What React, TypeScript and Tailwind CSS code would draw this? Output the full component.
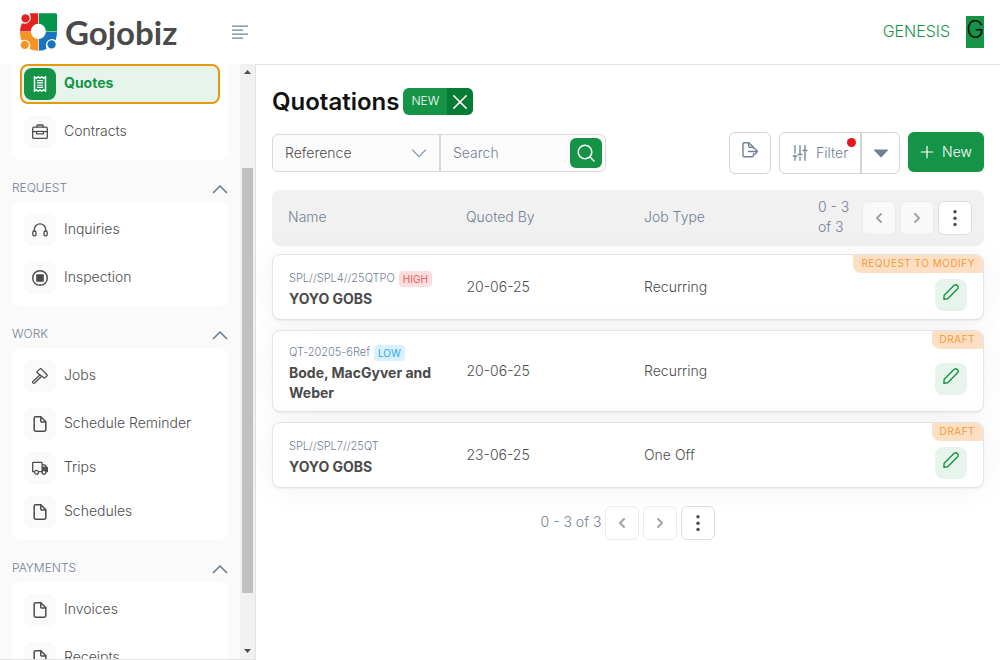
import React from "react";

type IconProps = { className?: string; children: React.ReactNode; box?: string; width?: number };

function Icon({ className = "size-4", children, box = "0 0 16 16", width = 1.3 }: IconProps) {
  return (
    <svg
      viewBox={box}
      className={className}
      fill="none"
      stroke="currentColor"
      strokeWidth={width}
      strokeLinecap="round"
      strokeLinejoin="round"
      aria-hidden="true"
    >
      {children}
    </svg>
  );
}

const ReceiptIcon = () => (
  <Icon width={1.5}>
    <path d="M2.5 1v14l1.8-1.2L6.2 15 8 13.8 9.8 15l1.9-1.2 1.8 1.2V1l-1.8 1.2L9.8 1 8 2.2 6.2 1 4.3 2.2z" strokeLinejoin="miter" />
    <path d="M5.4 4.6h5.2M5.4 6.900h5.2M5.4 9.200h5.2M5.4 11.400h5.2" strokeWidth="1.1" />
  </Icon>
);
const BriefcaseIcon = () => (
  <Icon>
    <rect x=".7" y="3.2" width="14.6" height="11.2" rx="1.2" />
    <path d="M5 3V1.6Q5 1 5.6 1h4.8q.6 0 .6.6V3M.8 7.6h3.4M11.8 7.6h3.4M4.6 7.4h6.8v2.4H4.6z" />
  </Icon>
);
const HeadphonesIcon = () => (
  <Icon>
    <path d="M2.3 9V7.6a5.7 5.7 0 0 1 11.4 0V9" />
    <rect x=".8" y="9" width="3.2" height="4.8" rx="1.4" />
    <rect x="12" y="9" width="3.2" height="4.8" rx="1.4" />
  </Icon>
);
const StopCircleIcon = () => (
  <Icon width={1.4}>
    <circle cx="8" cy="8" r="7.3" />
    <rect x="4.9" y="4.9" width="6.2" height="6.2" fill="currentColor" />
  </Icon>
);
const HammerIcon = () => (
  <Icon>
    <path d="M5.2 3.6 8 .9q.6-.5 1.2 0l5.8 5.9q.5.6 0 1.1l-2 1.9q-.6.4-1.1 0L5.2 4.8q-.5-.6 0-1.2z" />
    <path d="M7.6 7.3.9 13.4q-.5 1 .2 1.6.8.6 1.6 0l6.4-6.3" />
  </Icon>
);
const FileIcon = () => (
  <Icon width={1.5}>
    <path d="M3.6.8h5.2l5 5v8q0 1.4-1.4 1.4H3.6q-1.4 0-1.4-1.4V2.2Q2.2.8 3.6.8z" />
    <path d="M8.8.9v4.3q0 .7.7.7h4.2" />
  </Icon>
);
const TruckIcon = () => (
  <Icon>
    <path d="M2 11.6H.7V2.9q0-.6.6-.6h8.2q.6 0 .6.6v8.7H7.2M10.2 4.8h2.6l2.5 3.3v3.5h-1" />
    <path d="M10.8 7.2h4l.5 1.3v2.8h-1.6q-1.6-1.4-2.9 0z" fill="currentColor" />
    <circle cx="4.5" cy="12.3" r="1.9" />
    <circle cx="12" cy="12.3" r="1.9" fill="#fafafa" />
  </Icon>
);

const ChevronUp = () => (
  <Icon className="h-4 w-4 text-[#718096]" width={1.7}>
    <path d="m1.5 12.5 6.5-6.5 6.5 6.5" />
  </Icon>
);

type Entry = { label: string; icon: () => React.ReactElement; active?: boolean };
type Group = { title?: string; items: Entry[] };

const groups: Group[] = [
  {
    items: [
      { label: "Quotes", icon: ReceiptIcon, active: true },
      { label: "Contracts", icon: BriefcaseIcon },
    ],
  },
  {
    title: "REQUEST",
    items: [
      { label: "Inquiries", icon: HeadphonesIcon },
      { label: "Inspection", icon: StopCircleIcon },
    ],
  },
  {
    title: "WORK",
    items: [
      { label: "Jobs", icon: HammerIcon },
      { label: "Schedule Reminder", icon: FileIcon },
      { label: "Trips", icon: TruckIcon },
      { label: "Schedules", icon: FileIcon },
    ],
  },
  {
    title: "PAYMENTS",
    items: [
      { label: "Invoices", icon: FileIcon },
      { label: "Receipts", icon: FileIcon },
    ],
  },
];

function NavItem({ label, icon: Glyph, active }: Entry) {
  return (
    <li className="mb-3 first:mb-4 last:mb-0">
      <a
        href="#"
        className={
          active
            ? "-m-1 flex items-center gap-2 rounded-lg border-2 border-[#e69a0b] bg-[#e7f4eb] p-0.5 font-bold text-[#159447]"
            : "flex items-center gap-2 text-[#4d4d4d]"
        }
      >
        <span
          className={
            active
              ? "grid size-8 place-items-center rounded-lg bg-[#159447] text-white"
              : "grid size-8 place-items-center rounded-lg bg-[#fafafa]"
          }
        >
          <Glyph />
        </span>
        <span className="pb-0.5 leading-5">{label}</span>
      </a>
    </li>
  );
}

function Sidebar() {
  return (
    <aside className="flex w-64 shrink-0 overflow-hidden border-r border-b border-[#e2e2e2] bg-[#fafafa]">
      <nav className="min-h-0 flex-1 px-3" aria-label="Main">
        {groups.map((g) => (
          <section key={g.items[0].label}>
            {g.title && (
              <button className="mt-4 mb-0.5 flex h-6 w-full items-center justify-between text-xs text-[#718096]">
                {g.title}
                <ChevronUp />
              </button>
            )}
            <ul className={g.title ? "rounded-lg bg-white p-3" : "rounded-b-lg bg-white px-3 pt-1 pb-3"}>
              {g.items.map((item) => (
                <NavItem key={item.label} {...item} />
              ))}
            </ul>
          </section>
        ))}
      </nav>
      <div className="flex w-[15px] flex-col items-center bg-[#f1f1f1] text-[#4d4d4d]" aria-hidden="true">
        <svg viewBox="0 0 15 16" className="h-4 w-full" fill="currentColor">
          <path d="M7.5 6 11 10H4z" />
        </svg>
        <div className="flex w-full flex-1 flex-col items-center">
          <div className="grow-[88]" />
          <div className="w-[11px] grow-[425] bg-[#c1c1c1]" />
          <div className="grow-[50]" />
        </div>
        <svg viewBox="0 0 15 16" className="h-4 w-full" fill="currentColor">
          <path d="M4 6h7l-3.5 4z" />
        </svg>
      </div>
    </aside>
  );
}

function Logo() {
  return (
    <a href="#" className="flex items-center gap-2 text-[#4a4a4a]">
      <svg viewBox="0 0 37.5 38" className="h-[38px] w-[37px]" aria-hidden="true">
        <path d="M0 18.4q.2-5 2.200-8.200Q8 12 10.800 6.500 11.600 3 9.800 0h8.600v18.4z" fill="#e42320" />
        <path d="M19.1 0H36q1.5 0 1.5 1.5v16.9H19.1z" fill="#00954a" />
        <path d="M0 19.1h18.4V38q-5.500 0-8.600-1.800 1.800-4.500-1.200-7.800-3.300-2.600-7 -.8Q0 24 0 19.100z" fill="#f79226" />
        <path d="M19.1 19.1h18.4q0 5-1.400 8.200-4.300-2.600-8.100.5-3 3.900-.9 8.200-3 2-8 2z" fill="#1a74bc" />
        <circle cx="5.6" cy="5.2" r="4.2" fill="#e42320" />
        <circle cx="4.8" cy="32" r="4.2" fill="#f79226" />
        <circle cx="32" cy="31.600" r="4.2" fill="#1a74bc" />
        <circle cx="18.6" cy="18.4" r="7.7" fill="#fff" />
      </svg>
      <span className="font-[Lato] text-[33px] leading-9 font-bold">Gojobiz</span>
    </a>
  );
}

function Header() {
  return (
    <header className="flex h-16 items-center bg-white pr-4 pl-5">
      <div className="flex w-[228px] items-center justify-between">
        <Logo />
        <button aria-label="Toggle menu" className="text-[#718096]">
          <Icon width={1.3}>
            <path d="M.5 2.2h15M.5 6.2h10M.5 10.2h15M.5 14.2h10" />
          </Icon>
        </button>
      </div>
      <span className="ml-auto pb-0.5 text-base leading-6 text-[#159447]">GENESIS</span>
      <button className="ml-4 h-8 bg-[#159447] pb-1 text-2xl leading-7 text-[#111]">G</button>
    </header>
  );
}

const pageButton = "grid size-[34px] place-items-center rounded-md border";

function Pager({ label, className }: { label: string; className: string }) {
  return (
    <div className={className}>
      <span className="pb-0.5 leading-5 text-[#718096]">{label}</span>
      <div className="flex gap-1">
        <button aria-label="Previous page" className={`${pageButton} border-[#ebebeb] bg-white/60 text-[#a3a3a3]`}>
          <Icon width={2}>
            <path d="M10 4 6 8l4 4" />
          </Icon>
        </button>
        <button aria-label="Next page" className={`${pageButton} border-[#ebebeb] bg-white/60 text-[#a3a3a3]`}>
          <Icon width={2}>
            <path d="m6 4 4 4-4 4" />
          </Icon>
        </button>
        <button aria-label="More options" className={`${pageButton} border-[#dedede] bg-white text-[#4d4d4d]`}>
          <svg viewBox="0 0 16 16" className="size-4" fill="currentColor" aria-hidden="true">
            <circle cx="8" cy="1.8" r="1.7" />
            <circle cx="8" cy="8.2" r="1.7" />
            <circle cx="8" cy="14.4" r="1.7" />
          </svg>
        </button>
      </div>
    </div>
  );
}

function Toolbar() {
  return (
    <div className="flex items-center gap-2">
      <div className="flex h-[38px] w-[334px] rounded-md border border-[#d9d9d9] bg-[#fcfcfc]">
        <div className="relative flex w-[168px] border-r-2 border-[#d9d9d9]">
          <select
            aria-label="Search field"
            className="w-full appearance-none bg-transparent px-3 font-light text-[#4d4d4d]"
          >
            <option>Reference</option>
          </select>
          <span className="pointer-events-none absolute inset-y-0 right-3 flex items-center text-[#94a3b8]">
            <Icon width={1.5}>
              <path d="m1.5 5 6.5 6.5L14.5 5" />
            </Icon>
          </span>
        </div>
        <input
          aria-label="Search"
          placeholder="Search"
          className="w-0 flex-1 bg-transparent px-3 placeholder:text-[#718096]"
        />
        <button
          aria-label="Run search"
          className="my-[3px] mr-[3px] grid w-8 place-items-center rounded-md bg-[#159447] text-white"
        >
          <Icon className="size-[18px]" box="0 0 18 18" width={1.5}>
            <circle cx="8" cy="8" r="6.8" />
            <path d="m13 13 4 4" />
          </Icon>
        </button>
      </div>
      <button
        aria-label="Export"
        className="ml-auto grid size-[42px] place-items-center rounded-md border border-[#d4d4d4] bg-white pb-1.5 text-[#718096]"
      >
        <Icon className="size-4" width={1.4}>
          <path d="M11.5 11.8v1.6q0 1.3-1.3 1.3H2.3Q1 14.7 1 13.400V2Q1 .7 2.3.7h4.500l4.700 4.500v1.100" />
          <path d="M6.8.9v3.700q0 .6.6.6h4M6.500 9.500h8.900M12.800 6.500l2.700 3-2.700 2.700" />
        </Icon>
      </button>
      <div className="flex h-[42px] rounded-md border border-[#d4d4d4] bg-white text-[#718096]">
        <button className="relative flex w-[80px] items-center justify-center gap-2">
          <Icon className="size-4">
            <path d="M3 .7v7.500M3 11v4.300M1.200 11h3.600M8 .7v8.600M8 12v3.300M6.200 9.500h3.600M13 .7v3.600M13 7v8.300M11.200 5.500h3.600" />
          </Icon>
          <span>Filter</span>
          <span className="absolute top-[5px] right-1 size-[9px] rounded-full bg-[#e4161b]" />
        </button>
        <button aria-label="Filter presets" className="grid w-[39px] place-items-center border-l-2 border-[#d4d4d4]">
          <svg viewBox="0 0 16 16" className="size-4" fill="currentColor" aria-hidden="true">
            <path d="M1.5 4.500h13q.8.300.3 1L8.700 12q-.7.600-1.400 0L1.200 5.500q-.5-.7.300-1z" />
          </svg>
        </button>
      </div>
      <button className="mb-0.5 flex h-10 items-center gap-2 rounded-md bg-[#159447] px-3 text-white">
        <Icon className="size-3.5" width={1.4}>
          <path d="M8 1.5v13M1.5 8h13" />
        </Icon>
        New
      </button>
    </div>
  );
}

type Quote = {
  ref: string;
  priority?: "HIGH" | "LOW";
  name: string;
  date: string;
  type: string;
  status: string;
};

const quotes: Quote[] = [
  { ref: "SPL//SPL4//25QTPO", priority: "HIGH", name: "YOYO GOBS", date: "20-06-25", type: "Recurring", status: "REQUEST TO MODIFY" },
  { ref: "QT-20205-6Ref", priority: "LOW", name: "Bode, MacGyver and Weber", date: "20-06-25", type: "Recurring", status: "DRAFT" },
  { ref: "SPL//SPL7//25QT", name: "YOYO GOBS", date: "23-06-25", type: "One Off", status: "DRAFT" },
];

function QuoteRow({ quote }: { quote: Quote }) {
  return (
    <tr className="relative grid grid-cols-4 items-center rounded-lg border border-[#e2e4e6] bg-white shadow-[0_0_32px_rgba(0,0,0,0.05),0_1px_2px_rgba(0,0,0,0.06)]">
      <td className="pt-3 pb-2 pl-4">
        <div className="flex h-5 items-center gap-1 text-[11px] whitespace-nowrap text-[#718096]">
          {quote.ref}
          {quote.priority && (
            <span
              className={
                quote.priority === "HIGH"
                  ? "rounded-sm bg-[#fddede] px-1 text-[10px] leading-4 font-normal text-[#f0595b]"
                  : "rounded-sm bg-[#d9f1fd] px-1 text-[10px] leading-4 font-normal text-[#2ea9e0]"
              }
            >
              {quote.priority}
            </span>
          )}
        </div>
        <div className="text-sm leading-5 font-bold text-[#4a4a4a]">{quote.name}</div>
      </td>
      <td className="px-4 leading-5">{quote.date}</td>
      <td className="px-4 leading-5">{quote.type}</td>
      <td className="flex justify-end pt-6 pr-4 pb-2">
        <span className="absolute top-0 right-0 rounded-tr-lg rounded-bl-lg bg-[#fde0c4] px-2 pb-0.5 text-[10px] leading-4 font-normal tracking-wider text-[#f49a3c]">
          {quote.status}
        </span>
        <button
          aria-label={`Edit ${quote.ref}`}
          className="grid size-8 place-items-center rounded-lg bg-[#e7f4eb] pb-1.5 text-[#159447]"
        >
          <Icon width={1.4}>
            <path d="M.8 15.2 1.2 11.2 11.2 1.3q1.7-1.2 3.2.2 1.5 1.6.2 3.2L4.7 14.7z" />
          </Icon>
        </button>
      </td>
    </tr>
  );
}

export default function App() {
  return (
    <div className="flex h-screen flex-col bg-white font-[Inter,sans-serif] text-sm font-light text-[#4d4d4d]">
      <Header />
      <div className="flex min-h-0 flex-1">
        <Sidebar />
        <main className="min-w-0 flex-1 border-t border-[#e2e2e2] px-4 pt-[23px]">
          <div className="mb-4 flex items-start gap-1">
            <h1 className="text-2xl leading-7 font-semibold text-[#111]">Quotations</h1>
            <div className="flex h-[27px] overflow-hidden rounded-md bg-[#159447] text-white">
              <span className="px-2 text-xs leading-[26px]">NEW</span>
              <button aria-label="Remove NEW filter" className="grid w-[26px] place-items-center bg-[#047c34]">
                <Icon className="size-3.5" width={1.7}>
                  <path d="m1 1 14 14M15 1 1 15" />
                </Icon>
              </button>
            </div>
          </div>
          <Toolbar />
          <table className="mt-4 flex flex-col gap-2">
            <thead className="block">
              <tr className="grid h-14 grid-cols-4 items-center rounded-lg bg-[#f1f1f1] text-left text-[#718096]">
                <th className="px-4 pb-0.5 font-light">Name</th>
                <th className="px-4 pb-0.5 font-light">Quoted By</th>
                <th className="px-4 pb-0.5 font-light">Job Type</th>
                <th className="px-3 font-light">
                  <Pager label="0 - 3 of 3" className="flex items-center gap-2" />
                </th>
              </tr>
            </thead>
            <tbody className="flex flex-col gap-2.5">
              {quotes.map((q) => (
                <QuoteRow key={q.ref} quote={q} />
              ))}
            </tbody>
          </table>
          <Pager label="0 - 3 of 3" className="mt-[18px] flex items-center justify-center gap-1" />
        </main>
      </div>
    </div>
  );
}
